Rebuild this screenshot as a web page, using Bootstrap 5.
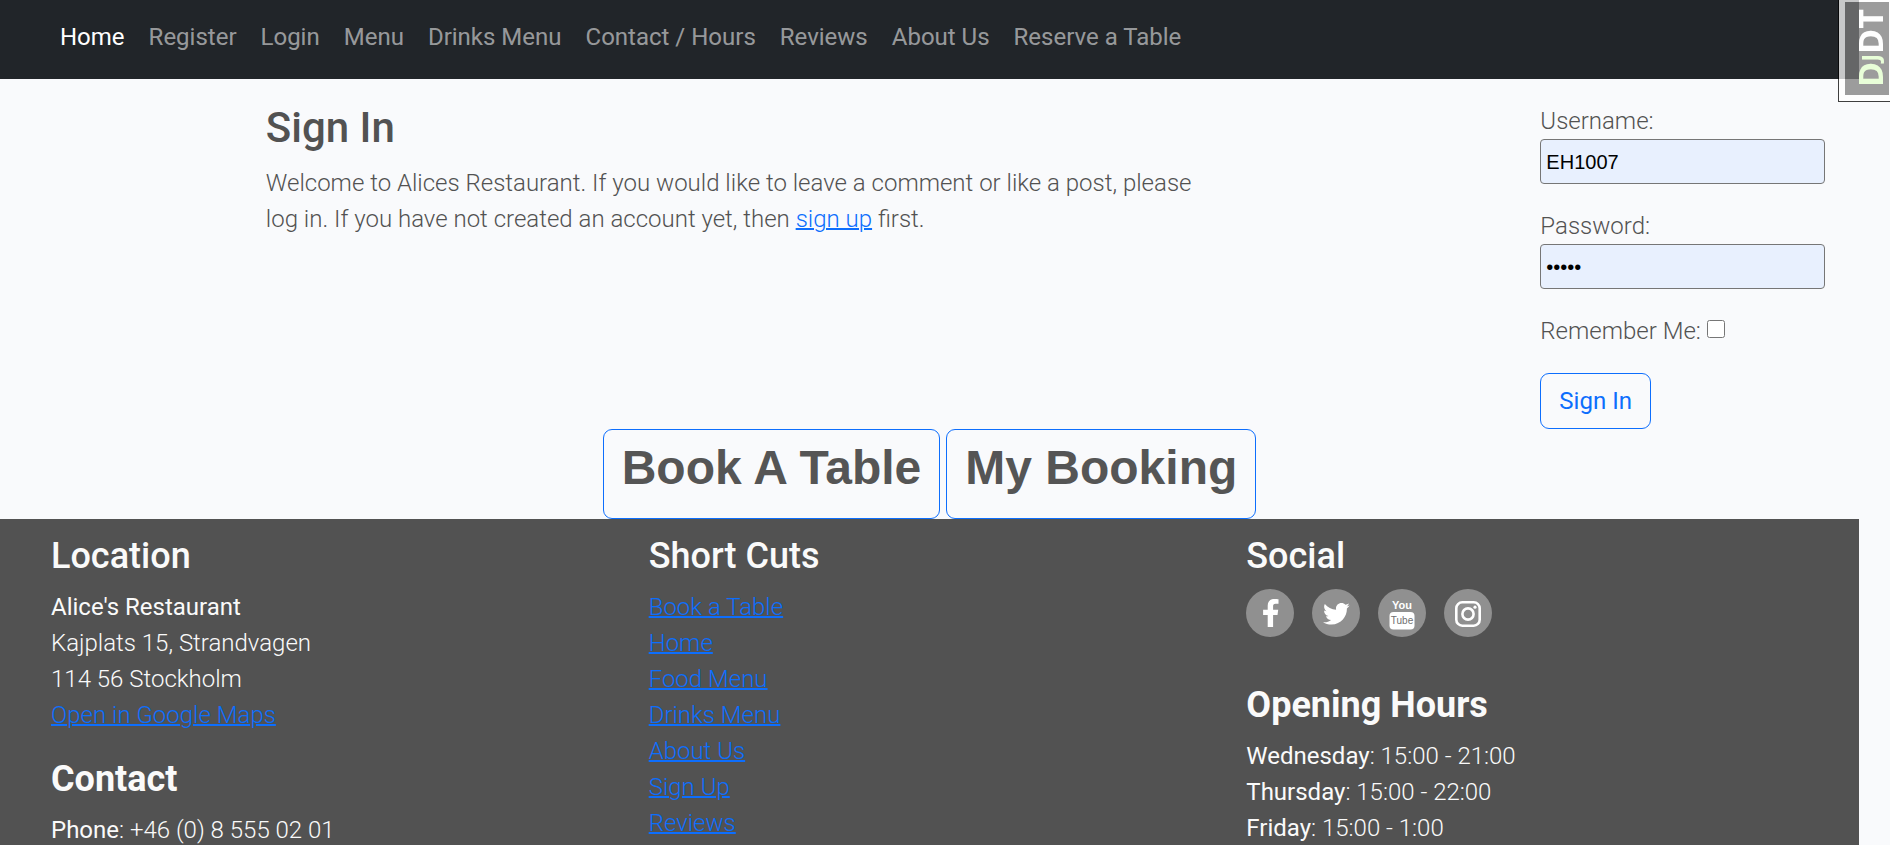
<!DOCTYPE html>
<html lang="en">
<head>
<meta charset="utf-8">
<meta name="viewport" content="width=device-width, initial-scale=1">
<title>Alices Restaurant - Sign In</title>
<link href="https://cdn.jsdelivr.net/npm/bootstrap@5.3.0/dist/css/bootstrap.min.css" rel="stylesheet">
<style>
  html { font-size: 24px; }
  body { font-family: Roboto, "Liberation Sans", sans-serif; font-weight: 300; line-height: 36px; color: #525252; background: #f9fafc; }
  a { color: #0d6efd; text-decoration-thickness: 2px; }
  strong { font-weight: 400; }
  .page { margin-right: 31px; }

  .site-nav { background: #212529; padding: 7px 48px 12px; }
  .site-nav .nav-link { padding: 12px; font-weight: 400; color: rgba(255, 255, 255, .55); }
  .site-nav .nav-link.active { color: #fff; }

  .signin { display: grid; grid-template-columns: 4fr 1fr; padding: 24px 0 0 14.3%; }
  .signin h1 { font-size: 42px; line-height: 50px; font-weight: 500; margin-bottom: 12px; }
  .intro { max-width: 75%; }
  .signin-form { padding-right: 34px; }
  .field { margin-bottom: 24px; }
  .text-field { display: block; width: 100%; height: 45px; padding: 2px 5px 0; border: 1px solid #767676; border-radius: 4px; background: #e8f0fe; color: #000; font: 20px "Liberation Sans", sans-serif; }
  .tick { width: 18px; height: 18px; margin: 0; vertical-align: 1px; }
  .btn { padding: 9px 18px; border-radius: 9px; line-height: 36px; font-weight: 400; }
  .bookings { gap: 6px; }
  .book-title { font: 700 48px/58px "Liberation Sans", sans-serif; margin-bottom: 12px; color: #555; }

  .site-footer { background: #525252; color: #fafafa; padding: 15px 33px 0; }
  .site-footer h2 { font-size: 36px; line-height: 45px; font-weight: 500; margin-bottom: 10px; }
  .site-footer h2 strong { font-weight: 700; }
  .site-footer p { margin-bottom: 24px; }
  .social { gap: 18px; margin-bottom: 46px; }
  .social a { display: block; width: 48px; height: 48px; border-radius: 50%; background: #909090; }
  .social svg { display: block; }

  .debug-handle { width: 52px; height: 102px; padding: 2px 0 6px 6px; border: solid #000; border-width: 0 0 1px 1px; background: #fff; opacity: .75; z-index: 10; }
  .debug-label { height: 100%; padding: 8px 6px 0 0; background: #7d7d7d; color: #fff; font: 700 34px/37px "Open Sans", sans-serif; writing-mode: vertical-rl; transform: rotate(180deg); }
  .debug-label .tint { color: #e2ffcc; }
  .debug-label .little { font-size: 24px; }
</style>
</head>
<body>
<div class="vh-100 overflow-hidden">
  <div class="page d-flex flex-column min-vh-100">
    <nav class="site-nav">
      <ul class="nav">
        <li><a class="nav-link active" href="#" aria-current="page">Home</a></li>
        <li><a class="nav-link" href="#">Register</a></li>
        <li><a class="nav-link" href="#">Login</a></li>
        <li><a class="nav-link" href="#">Menu</a></li>
        <li><a class="nav-link" href="#">Drinks Menu</a></li>
        <li><a class="nav-link" href="#">Contact / Hours</a></li>
        <li><a class="nav-link" href="#">Reviews</a></li>
        <li><a class="nav-link" href="#">About Us</a></li>
        <li><a class="nav-link" href="#">Reserve a Table</a></li>
      </ul>
    </nav>

    <main>
      <div class="signin">
        <div>
          <h1>Sign In</h1>
          <p class="intro mb-0">Welcome to Alices Restaurant. If you would like to leave a comment or like a post, please log in. If you have not created an account yet, then <a href="#">sign up</a> first.</p>
        </div>
        <form class="signin-form">
          <div class="field">
            <label class="d-block" for="username">Username:</label>
            <input class="text-field" type="text" id="username" value="EH1007">
          </div>
          <div class="field">
            <label class="d-block" for="password">Password:</label>
            <input class="text-field" type="password" id="password" value="alice">
          </div>
          <div class="field">
            <label for="remember">Remember Me:</label>
            <input class="tick" type="checkbox" id="remember">
          </div>
          <button class="btn btn-outline-primary d-block" type="button">Sign In</button>
        </form>
      </div>
      <div class="bookings d-flex justify-content-center">
        <button class="btn btn-outline-primary" type="button"><span class="book-title d-block">Book A Table</span></button>
        <button class="btn btn-outline-primary" type="button"><span class="book-title d-block">My Booking</span></button>
      </div>
    </main>

    <footer class="site-footer flex-grow-1">
      <div class="row mx-0">
        <div class="col-4">
          <h2>Location</h2>
          <p><strong>Alice's Restaurant</strong><br>Kajplats 15, Strandvagen<br>114 56 Stockholm<br><a href="#">Open in Google Maps</a></p>
          <h2><strong>Contact</strong></h2>
          <p><strong>Phone</strong>: +46 (0) 8 555 02 01</p>
        </div>
        <div class="col-4">
          <h2>Short Cuts</h2>
          <ul class="list-unstyled mb-0">
            <li><a href="#">Book a Table</a></li>
            <li><a href="#">Home</a></li>
            <li><a href="#">Food Menu</a></li>
            <li><a href="#">Drinks Menu</a></li>
            <li><a href="#">About Us</a></li>
            <li><a href="#">Sign Up</a></li>
            <li><a href="#">Reviews</a></li>
          </ul>
        </div>
        <div class="col-4">
          <h2>Social</h2>
          <div class="social d-flex">
            <a href="#" aria-label="Facebook"><svg width="48" height="48" viewBox="0 0 48 48" fill="#fff"><path transform="translate(16.5 10)" d="M16 .2V4.8H13.2C11 4.8 10.6 5.8 10.6 7.4V10.7H15.7L15 15.9H10.6V28H5.2V15.9H.6V10.7H5.2V6.8C5.2 2.4 7.9 0 11.8 0C13.7 0 15.4.1 16 .2Z"/></svg></a>
            <a href="#" aria-label="Twitter"><svg width="48" height="48" viewBox="0 0 48 48" fill="#fff"><path transform="translate(11 11.5) scale(.052)" d="M459.37 151.716c.325 4.548.325 9.097.325 13.645 0 138.72-105.583 298.558-298.558 298.558-59.452 0-114.68-17.219-161.137-47.106 8.447.974 16.568 1.299 25.34 1.299 49.055 0 94.213-16.568 130.274-44.832-46.132-.975-84.792-31.188-98.112-72.772 6.498.974 12.995 1.624 19.818 1.624 9.421 0 18.843-1.3 27.614-3.573-48.081-9.747-84.143-51.98-84.143-102.985v-1.299c13.969 7.797 30.214 12.67 47.431 13.319-28.264-18.843-46.781-51.005-46.781-87.391 0-19.492 5.197-37.36 14.294-52.954 51.655 63.675 129.3 105.258 216.365 109.807-1.624-7.797-2.599-15.918-2.599-24.04 0-57.828 46.782-104.934 104.934-104.934 30.213 0 57.502 12.67 76.67 33.137 23.715-4.548 46.456-13.32 66.599-25.34-7.798 24.366-24.366 44.833-46.132 57.827 21.117-2.273 41.584-8.122 60.426-16.243-14.292 20.791-32.161 39.308-52.628 54.253z"/></svg></a>
            <a href="#" aria-label="YouTube"><svg width="48" height="48" viewBox="0 0 48 48" fill="#fff" font-family="'Liberation Sans Narrow', 'Liberation Sans', sans-serif" text-anchor="middle"><text x="24" y="20" font-size="11" font-weight="700">You</text><rect x="11.5" y="23" width="25" height="17.5" rx="4"/><text x="24" y="35" font-size="10" fill="#707070">Tube</text></svg></a>
            <a href="#" aria-label="Instagram"><svg width="48" height="48" viewBox="0 0 48 48" fill="none" stroke="#fff"><rect x="12.3" y="13.3" width="23.4" height="23.4" rx="6" stroke-width="2.6"/><circle cx="24" cy="25" r="5.6" stroke-width="2.6"/><circle cx="31" cy="18.2" r="1.6" fill="#fff" stroke="none"/></svg></a>
          </div>
          <h2><strong>Opening Hours</strong></h2>
          <p class="mb-0"><strong>Wednesday</strong>: 15:00 - 21:00<br><strong>Thursday</strong>: 15:00 - 22:00<br><strong>Friday</strong>: 15:00 - 1:00</p>
        </div>
      </div>
    </footer>
  </div>
</div>
<a class="debug-handle position-fixed top-0 end-0 text-decoration-none" href="#" aria-label="Show toolbar"><span class="debug-label d-block"><span class="tint">D<span class="little">J</span></span>DT</span></a>
<script src="https://cdn.jsdelivr.net/npm/bootstrap@5.3.0/dist/js/bootstrap.bundle.min.js"></script>
</body>
</html>
